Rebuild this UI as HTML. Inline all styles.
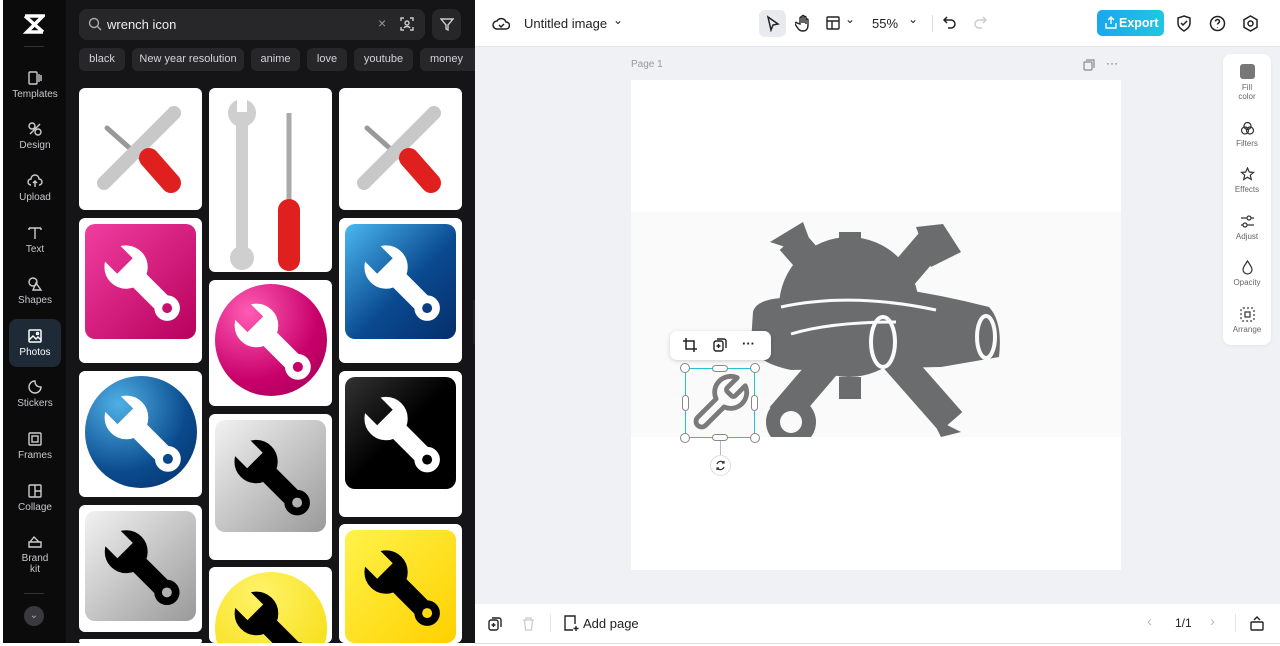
<!DOCTYPE html>
<html><head><meta charset="utf-8"><style>
*{box-sizing:border-box;margin:0;padding:0}
body{width:1280px;height:646px;overflow:hidden;background:#fff;font-family:"Liberation Sans",sans-serif;position:relative}
.abs{position:absolute}
#side{left:3px;top:0;width:63px;height:643px;background:#0b0b0c}
#panel{left:66px;top:0;width:409px;height:643px;background:#151517;overflow:hidden}
.nav{position:absolute;left:6px;width:52px;text-align:center;color:#c9c9cc;font-size:10px}
.nav svg{display:block;margin:0 auto 3px}
.chip{position:absolute;top:48px;height:23px;background:#27272a;border-radius:6px;color:#d4d4d8;font-size:11px;line-height:23px;text-align:center;white-space:nowrap;overflow:hidden}
.card{position:absolute;width:123px;background:#fff;border-radius:6px;overflow:hidden}
.icon{position:absolute;left:6px;top:6px;right:6px;border-radius:10px;overflow:hidden}
.tb{color:#222;font-size:13px}
.rt{position:absolute;left:0;width:48px;text-align:center;font-size:8px;color:#666;line-height:9px}
.rt svg{display:block;margin:0 auto 3px}
</style></head><body>
<svg width="0" height="0" style="position:absolute"><defs>
<mask id="wm" maskUnits="userSpaceOnUse" x="0" y="0" width="100" height="100">
 <rect width="100" height="100" fill="#fff"/>
 <polygon points="29,43 43,29 20,6 6,20" fill="#000"/>
 <circle cx="74" cy="74" r="4.5" fill="#000"/>
</mask>
<g id="wr" mask="url(#wm)">
 <circle cx="37" cy="37" r="19"/>
 <path d="M37 37L74 74" stroke-width="17" stroke-linecap="round"/>
 <circle cx="74" cy="74" r="11"/>
</g>
</defs></svg>

<div id="side" class="abs">
 <svg class="abs" style="left:20px;top:14px" width="22" height="20" viewBox="0 0 22 20"><path d="M2 2h18L4 18h16M2 2l18 16" stroke="#fff" stroke-width="3.5" fill="none"/></svg>
 <div class="abs" style="left:21px;top:46px;width:20px;height:1px;background:#333"></div>
 <div class="nav" style="top:70px"><svg width="16" height="16" viewBox="0 0 16 16" fill="none" stroke="#ccc" stroke-width="1.4"><rect x="2" y="2" width="8" height="12" rx="1"/><path d="M12 4v8M14 5v6"/></svg>Templates</div>
 <div class="nav" style="top:121px"><svg width="16" height="16" viewBox="0 0 16 16" fill="none" stroke="#ccc" stroke-width="1.4"><circle cx="5" cy="5" r="3"/><circle cx="11" cy="11" r="3"/><path d="M3 13L13 3"/></svg>Design</div>
 <div class="nav" style="top:173px"><svg width="16" height="16" viewBox="0 0 16 16" fill="none" stroke="#ccc" stroke-width="1.4"><path d="M4 12a3 3 0 010-6 4 4 0 018 0 3 3 0 010 6M8 14V8M6 10l2-2 2 2"/></svg>Upload</div>
 <div class="nav" style="top:225px"><svg width="16" height="16" viewBox="0 0 16 16" fill="none" stroke="#ccc" stroke-width="1.4"><path d="M2 3h12M8 3v11M2 3v2M14 3v2"/></svg>Text</div>
 <div class="nav" style="top:276px"><svg width="16" height="16" viewBox="0 0 16 16" fill="none" stroke="#ccc" stroke-width="1.4"><circle cx="6" cy="6" r="4"/><path d="M9 7l5 7H6z"/></svg>Shapes</div>
 <div class="abs" style="left:6px;top:319px;width:52px;height:48px;border-radius:8px;background:#1e2a36"></div>
 <div class="nav" style="top:328px;color:#fff"><svg width="16" height="16" viewBox="0 0 16 16" fill="none" stroke="#fff" stroke-width="1.5"><rect x="2" y="2" width="12" height="12" rx="1"/><path d="M2 12l4-4 3 3 2-2 3 3"/><circle cx="10.5" cy="5.5" r="1"/></svg>Photos</div>
 <div class="nav" style="top:379px"><svg width="16" height="16" viewBox="0 0 16 16" fill="none" stroke="#ccc" stroke-width="1.4"><path d="M14 8A6 6 0 118 2c0 4 2 6 6 6z"/></svg>Stickers</div>
 <div class="nav" style="top:431px"><svg width="16" height="16" viewBox="0 0 16 16" fill="none" stroke="#ccc" stroke-width="1.4"><rect x="2" y="2" width="12" height="12" rx="1"/><rect x="5" y="5" width="6" height="6"/></svg>Frames</div>
 <div class="nav" style="top:483px"><svg width="16" height="16" viewBox="0 0 16 16" fill="none" stroke="#ccc" stroke-width="1.4"><rect x="2" y="2" width="12" height="12" rx="1"/><path d="M8 2v12M8 8h6"/></svg>Collage</div>
 <div class="nav" style="top:534px"><svg width="16" height="16" viewBox="0 0 16 16" fill="none" stroke="#ccc" stroke-width="1.4"><path d="M2 8h12v5H2zM3 8l4-5 5 5"/></svg>Brand<br>kit</div>
 <div class="abs" style="left:21px;top:593px;width:20px;height:1px;background:#333"></div>
 <div class="abs" style="left:21px;top:606px;width:20px;height:20px;border-radius:50%;background:#3a3a3e;color:#aaa;font-size:10px;text-align:center;line-height:20px">⌄</div>
</div>

<div id="panel" class="abs">
 <div class="abs" style="left:13px;top:9px;width:346px;height:31px;background:#27272a;border-radius:8px"></div>
 <svg class="abs" style="left:22px;top:17px" width="14" height="14" viewBox="0 0 14 14" fill="none" stroke="#aaa" stroke-width="1.4"><circle cx="6" cy="6" r="4.5"/><path d="M9.5 9.5L13 13"/></svg>
 <div class="abs" style="left:41px;top:17px;color:#eee;font-size:13px">wrench icon</div>
 <div class="abs" style="left:312px;top:15px;color:#999;font-size:14px">×</div>
 <svg class="abs" style="left:334px;top:17px" width="14" height="14" viewBox="0 0 14 14" fill="none" stroke="#ccc" stroke-width="1.4"><path d="M1 4V1h3M10 1h3v3M13 10v3h-3M4 13H1v-3"/><circle cx="7" cy="6" r="2"/><path d="M4 11c1-2 5-2 6 0"/></svg>
 <div class="abs" style="left:366px;top:9px;width:29px;height:31px;background:#27272a;border-radius:8px"></div>
 <svg class="abs" style="left:374px;top:17px" width="14" height="14" viewBox="0 0 14 14" fill="none" stroke="#ccc" stroke-width="1.4"><path d="M1 2h12L8 8v5L6 12V8z"/></svg>
 <div class="chip" style="left:13px;width:46px">black</div>
 <div class="chip" style="left:66px;width:112px">New year resolution</div>
 <div class="chip" style="left:185px;width:49px">anime</div>
 <div class="chip" style="left:241px;width:40px">love</div>
 <div class="chip" style="left:288px;width:59px">youtube</div>
 <div class="chip" style="left:354px;width:55px;text-align:left;padding-left:10px;border-radius:6px 0 0 6px">money</div>

 <!-- col1 -->
 <div class="card" style="left:13px;top:88px;height:122px">
  <svg width="123" height="122" viewBox="0 0 123 122"><g stroke-linecap="round"><path d="M28 40L90 95" stroke="#999" stroke-width="5"/><path d="M25 95L95 25" stroke="#c8c8c8" stroke-width="14"/><path d="M70 70L92 95" stroke="#e0201e" stroke-width="20"/></g></svg>
 </div>
 <div class="card" style="left:13px;top:218px;height:145px">
  <div class="icon" style="height:115px;background:linear-gradient(135deg,#f03ea0,#b8005c)"><svg width="111" height="115" viewBox="0 0 100 100"><use href="#wr" fill="#fff" stroke="#fff"/></svg></div>
 </div>
 <div class="card" style="left:13px;top:371px;height:126px">
  <div class="icon" style="left:6px;top:5px;width:112px;height:112px;border-radius:50%;background:radial-gradient(circle at 30% 25%,#4fb0e6,#0a4a8c 60%,#062e6a)"><svg width="112" height="112" viewBox="0 0 100 100"><use href="#wr" fill="#fff" stroke="#fff"/></svg></div>
 </div>
 <div class="card" style="left:13px;top:505px;height:127px">
  <div class="icon" style="height:110px;background:linear-gradient(135deg,#f2f2f2,#999)"><svg width="111" height="110" viewBox="0 0 100 100"><use href="#wr" fill="#000" stroke="#000"/></svg></div>
 </div>
 <div class="card" style="left:13px;top:639px;height:4px"></div>
 <!-- col2 -->
 <div class="card" style="left:143px;top:88px;height:184px">
  <svg width="123" height="184" viewBox="0 0 123 184"><path d="M33 30v140" stroke="#cfcfcf" stroke-width="12"/><circle cx="33" cy="25" r="14" fill="#cfcfcf"/><circle cx="33" cy="170" r="12" fill="#cfcfcf"/><path d="M28 8h10v16h-10z" fill="#fff"/><path d="M80 25v100" stroke="#aaa" stroke-width="5"/><path d="M80 122v50" stroke="#e0201e" stroke-width="22" stroke-linecap="round"/></svg>
 </div>
 <div class="card" style="left:143px;top:280px;height:126px">
  <div class="icon" style="left:6px;top:4px;width:112px;height:112px;border-radius:50%;background:radial-gradient(circle at 30% 25%,#ff5cb5,#c8006a 60%,#a00055)"><svg width="112" height="112" viewBox="0 0 100 100"><use href="#wr" fill="#fff" stroke="#fff"/></svg></div>
 </div>
 <div class="card" style="left:143px;top:414px;height:146px">
  <div class="icon" style="height:112px;background:linear-gradient(135deg,#f2f2f2,#9a9a9a)"><svg width="111" height="112" viewBox="0 0 100 100"><use href="#wr" fill="#000" stroke="#000"/></svg></div>
 </div>
 <div class="card" style="left:143px;top:567px;height:76px">
  <div class="icon" style="left:6px;top:5px;width:112px;height:112px;border-radius:50%;background:radial-gradient(circle at 40% 20%,#fff36a,#f5d800)"><svg width="112" height="112" viewBox="0 0 100 100"><use href="#wr" fill="#000" stroke="#000"/></svg></div>
 </div>
 <!-- col3 -->
 <div class="card" style="left:273px;top:88px;height:122px">
  <svg width="123" height="122" viewBox="0 0 123 122"><g stroke-linecap="round"><path d="M28 40L90 95" stroke="#999" stroke-width="5"/><path d="M25 95L95 25" stroke="#c8c8c8" stroke-width="14"/><path d="M70 70L92 95" stroke="#e0201e" stroke-width="20"/></g></svg>
 </div>
 <div class="card" style="left:273px;top:218px;height:145px">
  <div class="icon" style="height:115px;background:linear-gradient(135deg,#4ab8f0,#0a4a90 55%,#052e6a)"><svg width="111" height="115" viewBox="0 0 100 100"><use href="#wr" fill="#fff" stroke="#fff"/></svg></div>
 </div>
 <div class="card" style="left:273px;top:371px;height:146px">
  <div class="icon" style="height:112px;background:linear-gradient(135deg,#333,#000 50%)"><svg width="111" height="112" viewBox="0 0 100 100"><use href="#wr" fill="#fff" stroke="#fff"/></svg></div>
 </div>
 <div class="card" style="left:273px;top:524px;height:119px">
  <div class="icon" style="height:113px;background:linear-gradient(135deg,#fff34a,#ffd000)"><svg width="111" height="113" viewBox="0 0 100 100"><use href="#wr" fill="#000" stroke="#000"/></svg></div>
 </div>
</div>
<div class="abs" style="left:473px;top:300px;width:7px;height:44px;background:#222;border-radius:0 6px 6px 0"></div>

<!-- right area -->
<div class="abs" style="left:475px;top:47px;width:805px;height:557px;background:#eff1f4"></div>
<div class="abs" style="left:475px;top:46px;width:805px;height:1px;background:#e4e6ea"></div>
<svg class="abs" style="left:492px;top:15px" width="18" height="18" viewBox="0 0 18 18" fill="none" stroke="#222" stroke-width="1.5"><path d="M5 14a4 4 0 010-8 5 5 0 019 1 3.5 3.5 0 010 7z"/><path d="M7 10l2 2 3-3"/></svg>
<div class="abs tb" style="left:524px;top:16px">Untitled image</div>
<div class="abs tb" style="left:613px;top:13px;font-size:12px">⌄</div>
<div class="abs" style="left:759px;top:10px;width:27px;height:27px;background:#e8eaee;border-radius:6px"></div>
<svg class="abs" style="left:765px;top:15px" width="16" height="17" viewBox="0 0 16 17" fill="none" stroke="#222" stroke-width="1.5"><path d="M3 2l10 7-5 1-2 5z"/></svg>
<svg class="abs" style="left:795px;top:14px" width="16" height="18" viewBox="0 0 16 18" fill="none" stroke="#222" stroke-width="1.4"><path d="M5 10V4a1 1 0 012 0v5V2.5a1 1 0 012 0V9V3.5a1 1 0 012 0V10V6a1 1 0 012 0v5c0 4-2 6-5 6s-4-1-6-4l-2-3a1 1 0 012-1z"/></svg>
<svg class="abs" style="left:826px;top:16px" width="14" height="14" viewBox="0 0 14 14" fill="none" stroke="#222" stroke-width="1.4"><rect x="1" y="1" width="12" height="12" rx="1"/><path d="M1 5h12M6 5v8"/></svg>
<div class="abs tb" style="left:845px;top:12px;font-size:12px">⌄</div>
<div class="abs tb" style="left:872px;top:16px">55%</div>
<div class="abs tb" style="left:908px;top:12px;font-size:12px">⌄</div>
<div class="abs" style="left:932px;top:15px;width:1px;height:17px;background:#ddd"></div>
<svg class="abs" style="left:942px;top:15px" width="16" height="16" viewBox="0 0 16 16" fill="none" stroke="#222" stroke-width="1.5"><path d="M5 2L2 5l3 3M2 5h7a4 4 0 010 8H6"/></svg>
<svg class="abs" style="left:972px;top:15px" width="16" height="16" viewBox="0 0 16 16" fill="none" stroke="#ccc" stroke-width="1.5"><path d="M11 2l3 3-3 3M14 5H7a4 4 0 000 8h3"/></svg>
<div class="abs" style="left:1097px;top:10px;width:67px;height:26px;background:linear-gradient(90deg,#1aa7ee,#21c6e0);border-radius:5px;color:#fff;font-size:12.5px;font-weight:bold;line-height:26px;padding-left:22px">Export</div>
<svg class="abs" style="left:1105px;top:16px" width="12" height="13" viewBox="0 0 12 13" fill="none" stroke="#fff" stroke-width="1.4"><path d="M6 8V1M3 4l3-3 3 3M1 7v5h10V7"/></svg>
<svg class="abs" style="left:1176px;top:15px" width="16" height="17" viewBox="0 0 16 17" fill="none" stroke="#222" stroke-width="1.5"><path d="M8 1l6 2v5c0 4-3 6-6 8-3-2-6-4-6-8V3z"/><path d="M5 8l2 2 4-4"/></svg>
<svg class="abs" style="left:1209px;top:15px" width="17" height="17" viewBox="0 0 17 17" fill="none" stroke="#222" stroke-width="1.5"><circle cx="8.5" cy="8.5" r="7"/><path d="M6.5 6.5a2 2 0 114 0c0 1.5-2 1.5-2 3M8.5 12v.5"/></svg>
<svg class="abs" style="left:1242px;top:15px" width="17" height="17" viewBox="0 0 17 17" fill="none" stroke="#222" stroke-width="1.5"><path d="M8.5 1l6.5 3.7v7.6L8.5 16 2 12.3V4.7z"/><circle cx="8.5" cy="8.5" r="2.5"/></svg>

<div class="abs" style="left:631px;top:59px;font-size:10px;color:#999">Page 1</div>
<svg class="abs" style="left:1083px;top:59px" width="12" height="12" viewBox="0 0 12 12" fill="none" stroke="#888" stroke-width="1.2"><rect x="1" y="3" width="8" height="8" rx="1"/><path d="M3 1h8v8"/></svg>
<div class="abs" style="left:1106px;top:56px;font-size:12px;color:#666">···</div>

<div class="abs" style="left:631px;top:80px;width:490px;height:490px;background:#fff"></div>
<div class="abs" style="left:631px;top:212px;width:490px;height:225px;background:#fafafa"></div>
<svg class="abs" style="left:631px;top:212px" width="490" height="225" viewBox="0 0 490 225">
 <g fill="#6b6c6d">
  <path d="M139 30L172 10L185 45Z"/>
  <path d="M160 28L320 210" stroke="#6b6c6d" stroke-width="30"/>
  <path d="M300 30L150 205" stroke="#6b6c6d" stroke-width="30"/>
  <path d="M285 15L312 12L330 40L300 55Z"/>
  <circle cx="160" cy="210" r="25"/>
  <path d="M300 205L330 220L310 225Z"/>
  <circle cx="218" cy="95" r="70"/>
  <rect x="208" y="20" width="22" height="20"/>
  <rect x="208" y="165" width="22" height="22"/>
  <path d="M122 100 Q125 88 150 86 Q185 75 235 72 Q300 80 358 95 Q372 110 368 145 L310 155 L160 158 Q122 150 120 130Z"/>
 </g>
 <circle cx="160" cy="210" r="11" fill="#fafafa"/>
 <path d="M160 122 Q200 110 265 110" stroke="#fafafa" stroke-width="3" fill="none"/>
 <path d="M150 95 Q220 80 305 98" stroke="#fafafa" stroke-width="3" fill="none"/>
 <ellipse cx="252" cy="130" rx="12" ry="25" fill="none" stroke="#fafafa" stroke-width="4"/>
 <ellipse cx="355" cy="125" rx="9" ry="21" fill="none" stroke="#fafafa" stroke-width="4"/>
</svg>

<!-- selection -->
<div class="abs" style="left:670px;top:331px;width:101px;height:29px;background:#fff;border-radius:7px;box-shadow:0 1px 4px rgba(0,0,0,.18)"></div>
<svg class="abs" style="left:683px;top:338px" width="14" height="14" viewBox="0 0 14 14" fill="none" stroke="#222" stroke-width="1.5"><path d="M3 0v11h11M0 3h11v11"/></svg>
<svg class="abs" style="left:713px;top:338px" width="14" height="14" viewBox="0 0 14 14" fill="none" stroke="#222" stroke-width="1.4"><rect x="1" y="3" width="9" height="10" rx="2"/><path d="M4 1h7a2 2 0 012 2v7M5.5 6v4M3.5 8h4"/></svg>
<div class="abs" style="left:742px;top:336px;font-size:13px;font-weight:bold;color:#222">···</div>
<div class="abs" style="left:685px;top:368px;width:70px;height:70px;border:1.5px solid #22c3d8;background:#fafafa"></div>
<svg class="abs" style="left:688px;top:371px" width="64" height="64" viewBox="0 0 24 24" fill="none" stroke="#7a7a7a" stroke-width="1.8" stroke-linejoin="round"><path d="M14.7 6.3a1 1 0 000 1.4l1.6 1.6a1 1 0 001.4 0l3.77-3.77a6 6 0 01-7.940 7.94l-6.91 6.91a2.12 2.12 0 01-3-3l6.91-6.91a6 6 0 017.94-7.94l-3.76 3.76z"/></svg>
<div class="abs" style="left:680px;top:363px;width:10px;height:10px;border-radius:50%;background:#fff;border:1px solid #888"></div>
<div class="abs" style="left:750px;top:363px;width:10px;height:10px;border-radius:50%;background:#fff;border:1px solid #888"></div>
<div class="abs" style="left:680px;top:433px;width:10px;height:10px;border-radius:50%;background:#fff;border:1px solid #888"></div>
<div class="abs" style="left:750px;top:433px;width:10px;height:10px;border-radius:50%;background:#fff;border:1px solid #888"></div>
<div class="abs" style="left:712px;top:365px;width:16px;height:7px;border-radius:4px;background:#fff;border:1px solid #888"></div>
<div class="abs" style="left:712px;top:434px;width:16px;height:7px;border-radius:4px;background:#fff;border:1px solid #888"></div>
<div class="abs" style="left:682px;top:395px;width:7px;height:16px;border-radius:4px;background:#fff;border:1px solid #888"></div>
<div class="abs" style="left:751px;top:395px;width:7px;height:16px;border-radius:4px;background:#fff;border:1px solid #888"></div>
<div class="abs" style="left:720px;top:441px;width:1px;height:14px;background:#bbb"></div>
<div class="abs" style="left:710px;top:455px;width:21px;height:21px;border-radius:50%;background:#fff;border:1px solid #ddd"></div>
<svg class="abs" style="left:715px;top:460px" width="11" height="11" viewBox="0 0 11 11" fill="none" stroke="#333" stroke-width="1.2"><path d="M2 4a4 4 0 017-1M9 7a4 4 0 01-7 1M9 1v2H7M2 10V8h2"/></svg>

<!-- right tools -->
<div class="abs" style="left:1223px;top:54px;width:48px;height:291px;background:#fff;border-radius:8px;box-shadow:0 1px 3px rgba(0,0,0,.06)">
 <div class="rt" style="top:10px"><div style="width:15px;height:15px;background:#777;border-radius:3px;margin:0 auto 4px"></div>Fill<br>color</div>
 <div class="rt" style="top:67px"><svg width="15" height="15" viewBox="0 0 15 15" fill="none" stroke="#333" stroke-width="1.2"><circle cx="7.5" cy="5" r="3.5"/><circle cx="5" cy="9.5" r="3.5"/><circle cx="10" cy="9.5" r="3.5"/></svg>Filters</div>
 <div class="rt" style="top:113px"><svg width="15" height="15" viewBox="0 0 15 15" fill="none" stroke="#333" stroke-width="1.2"><path d="M7.5 1l1.8 4 4.2.4-3.2 2.8 1 4.3-3.8-2.3-3.8 2.3 1-4.3L1.5 5.4l4.2-.4z"/></svg>Effects</div>
 <div class="rt" style="top:160px"><svg width="15" height="15" viewBox="0 0 15 15" fill="none" stroke="#333" stroke-width="1.2"><path d="M1 4h13M1 11h13"/><circle cx="9" cy="4" r="2" fill="#fff"/><circle cx="5" cy="11" r="2" fill="#fff"/></svg>Adjust</div>
 <div class="rt" style="top:206px"><svg width="15" height="15" viewBox="0 0 15 15" fill="none" stroke="#333" stroke-width="1.2"><path d="M7.5 1C5 5 3 7 3 9.5a4.5 4.5 0 009 0C12 7 10 5 7.5 1z"/></svg>Opacity</div>
 <div class="rt" style="top:253px"><svg width="15" height="15" viewBox="0 0 15 15" fill="none" stroke="#333" stroke-width="1.2" stroke-dasharray="2 2"><rect x="1" y="1" width="13" height="13" rx="2"/><rect x="5" y="5" width="5" height="5" stroke-dasharray="none"/></svg>Arrange</div>
</div>

<!-- bottom bar -->
<div class="abs" style="left:475px;top:604px;width:805px;height:40px;background:#fff;border-bottom:1px solid #ddd"></div>
<svg class="abs" style="left:488px;top:617px" width="14" height="14" viewBox="0 0 14 14" fill="none" stroke="#222" stroke-width="1.4"><rect x="1" y="3" width="9" height="10" rx="2"/><path d="M4 1h7a2 2 0 012 2v7M5.5 6v4M3.5 8h4"/></svg>
<svg class="abs" style="left:522px;top:617px" width="13" height="14" viewBox="0 0 13 14" fill="none" stroke="#ccc" stroke-width="1.3"><path d="M1 3h11M4 3V1h5v2M2.5 3l1 10h6l1-10"/></svg>
<div class="abs" style="left:550px;top:614px;width:1px;height:18px;background:#e5e5e5"></div>
<svg class="abs" style="left:563px;top:615px" width="16" height="17" viewBox="0 0 16 17" fill="none" stroke="#222" stroke-width="1.4"><path d="M10 15H2V1h10v8"/><path d="M13 11v5M10.5 13.5h5"/></svg>
<div class="abs tb" style="left:583px;top:616px">Add page</div>
<div class="abs" style="left:1147px;top:613px;color:#bbb;font-size:15px">‹</div>
<div class="abs tb" style="left:1175px;top:616px;font-size:12px">1/1</div>
<div class="abs" style="left:1210px;top:613px;color:#bbb;font-size:15px">›</div>
<div class="abs" style="left:1235px;top:614px;width:1px;height:18px;background:#e5e5e5"></div>
<svg class="abs" style="left:1250px;top:615px" width="14" height="16" viewBox="0 0 14 16" fill="none" stroke="#222" stroke-width="1.4"><rect x="1" y="7" width="12" height="8" rx="1"/><path d="M4 5l3-3 3 3"/></svg>
</body></html>
